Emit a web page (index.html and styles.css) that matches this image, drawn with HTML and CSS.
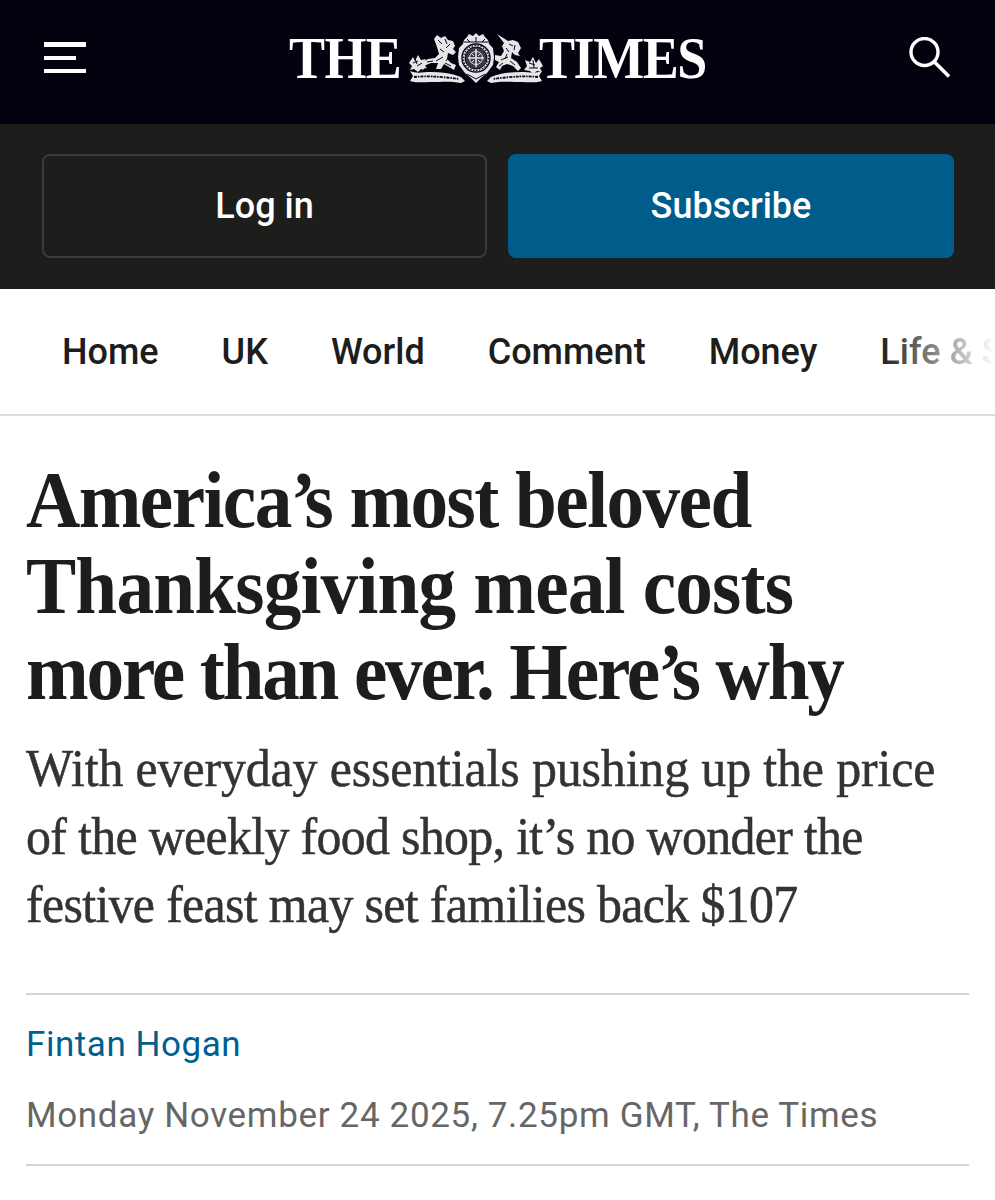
FILE: index.html
```html
<!DOCTYPE html>
<html lang="en">
<head>
<meta charset="utf-8">
<title>The Times</title>
<link rel="stylesheet" href="styles.css">
</head>
<body>
<header class="masthead">
  <svg class="menu-icon" width="42" height="31" viewBox="0 0 42 31" aria-hidden="true">
    <rect x="0" y="0" width="42" height="5" fill="#fff"/>
    <rect x="0" y="14" width="32" height="4" fill="#fff"/>
    <rect x="0" y="27" width="42" height="4" fill="#fff"/>
  </svg>
  <div class="logo">
    <span class="logo-word logo-the">THE</span>
    <svg class="crest" width="134" height="52" viewBox="0 0 134 52" aria-hidden="true">
      <g fill="#e6e6e6">
        <!-- motto ribbon -->
        <path d="M1 39 C8 42 14 40 22 40 C32 40 42 41 52 45 L56 49 L52 51 C42 49 34 50 22 50 C14 50 6 51 1 49 L4 44 Z"/>
        <path d="M133 39 C126 42 120 40 112 40 C102 40 92 41 82 45 L78 49 L82 51 C92 49 100 50 112 50 C120 50 128 51 133 49 L130 44 Z"/>
        <!-- lion -->
        <path d="M25 7 L28 3 L32 6 L36 4 L39 8 L44 9 L46 14 L44 17 L47 20 L44 23 L39 21 L38 27 L42 31 L47 33 L45 38 L40 35 L35 32 L32 37 L27 37 L29 31 L22 31 L17 33 L14 38 L11 36 L14 30 L19 27 L26 26 L30 22 L28 15 Z"/>
        <!-- unicorn -->
        <path d="M88 2 L99 9 L104 8 L109 10 L112 16 L109 21 L111 24 L106 23 L103 20 L102 26 L108 30 L112 36 L109 39 L104 34 L98 32 L93 34 L91 38 L87 35 L90 30 L86 28 L86 23 L92 24 L95 19 L93 14 L95 11 Z"/>
        <!-- thistle and rose -->
        <path d="M0 31 L4 25 L6 29 L9 23 L12 28 L17 27 L14 32 L18 36 L12 37 L9 40 L5 37 L1 38 L3 34 Z"/>
        <path d="M134 34 L130 27 L127 31 L124 25 L121 30 L116 28 L118 34 L115 38 L121 39 L124 42 L128 39 L133 40 L131 36 Z"/>
        <!-- crowned shield -->
        <path d="M67 1 L70 4 L74 2 L76 5 L79 8 L80 12 L84 16 L85 25 L84 33 L78 41 L72 46 L67 51 L62 46 L56 41 L50 33 L49 25 L50 16 L54 12 L55 8 L58 5 L60 2 L64 4 Z"/>
      </g>
      <g fill="none" stroke="#05051a">
        <circle cx="67" cy="26" r="14" stroke-width="1.4"/>
        <circle cx="67" cy="26" r="11" fill="#3a3a44" stroke-width="1"/>
        <circle cx="67" cy="26" r="12.5" stroke-width="1.2" stroke-dasharray="1.5 1.5"/>
        <path d="M55 10 H79 M58 7 L61 10 M67 5 V10 M76 7 L73 10" stroke-width="1"/>
        <path d="M58 42 L67 47 L76 42" stroke-width="1"/>
        <path d="M5 45 C16 44 28 44 50 47" stroke-width="1.8" stroke-dasharray="3 1 1.5 1"/>
        <path d="M129 45 C118 44 106 44 84 47" stroke-width="1.8" stroke-dasharray="3 1 1.5 1"/>
        <path d="M29 8 L33 12 M36 7 L38 12 M41 12 L37 16 M31 17 L35 20 M27 29 L34 25 M18 30 L24 29 M40 25 L37 29 M36 31 L42 34" stroke-width="1"/>
        <path d="M100 12 L104 14 M106 13 L105 18 M97 16 L100 20 M92 28 L99 25 M101 29 L106 33 M94 31 L90 34 M98 22 L96 27" stroke-width="1"/>
        <path d="M4 31 L9 29 M8 34 L13 31 M6 27 L8 32 M120 31 L126 33 M124 28 L125 36 M120 36 L129 36" stroke-width="1"/>
      </g>
      <g fill="none" stroke="#e6e6e6">
        <path d="M67 17 V35 M59 26 H75" stroke-width="1.6"/>
        <circle cx="67" cy="26" r="6.5" stroke-width="1"/>
        <path d="M62 21 L65 24 M72 21 L69 24 M62 31 L65 28 M72 31 L69 28" stroke-width="1"/>
      </g>
    </svg>
    <span class="logo-word logo-times">TIMES</span>
  </div>
  <svg class="search-icon" width="42" height="42" viewBox="0 0 42 42" aria-hidden="true">
    <circle cx="15.5" cy="15" r="13.5" fill="none" stroke="#fff" stroke-width="3.4"/>
    <path d="M25.5 25 L40 39.5" fill="none" stroke="#fff" stroke-width="3.6"/>
  </svg>
</header>

<div class="auth-bar">
  <a class="auth-btn auth-login">Log in</a>
  <a class="auth-btn auth-subscribe">Subscribe</a>
</div>

<nav class="section-nav">
  <a>Home</a>
  <a>UK</a>
  <a>World</a>
  <a>Comment</a>
  <a>Money</a>
  <a>Life &amp; Style</a>
</nav>

<main class="article-head">
  <h1 class="headline">
    <span class="line headline-1">America<span class="apos">’</span>s most beloved</span>
    <span class="line headline-2">Thanksgiving meal costs</span>
    <span class="line headline-3">more than ever. Here<span class="apos">’</span>s why</span>
  </h1>
  <p class="standfirst">
    <span class="line stand-1">With everyday essentials pushing up the price</span>
    <span class="line stand-2">of the weekly food shop, it’s no wonder the</span>
    <span class="line stand-3">festive feast may set families back $107</span>
  </p>
  <div class="byline">
    <a class="author">Fintan Hogan</a>
    <p class="dateline">Monday November 24 2025, 7.25pm GMT, The Times</p>
  </div>
</main>
</body>
</html>
```
FILE: styles.css
```css
* { box-sizing: border-box; }
html, body { margin: 0; padding: 0; background: #fff; }
body { font-family: Roboto, "Liberation Sans", sans-serif; overflow-x: hidden; }

.masthead {
  height: 124px;
  background: #02020f;
  display: flex;
  align-items: center;
  justify-content: space-between;
  padding: 0 44px;
}
.menu-icon { display: block; margin-bottom: 9px; }
.search-icon { display: block; margin-top: -9px; }
.logo { display: flex; align-items: center; margin-bottom: 8px; }
.logo-word {
  font-family: "Liberation Serif", serif;
  font-weight: 700;
  font-size: 60px;
  line-height: 1;
  color: #fff;
  transform: scaleX(0.9);
  transform-origin: left center;
}
.logo-the { letter-spacing: -0.7px; margin-right: -12.3px; }
.logo-times { letter-spacing: -1.6px; margin-right: -18.6px; }
.crest { display: block; margin: 0 -4px 0 8px; }

.auth-bar {
  height: 165px;
  background: #1d1d1b;
  display: grid;
  grid-template-columns: 445px 446px;
  column-gap: 21px;
  padding: 30px 41px 31px 42px;
}
.auth-btn {
  display: flex;
  align-items: center;
  justify-content: center;
  border-radius: 8px;
  color: #fff;
  font-size: 36px;
  font-weight: 500;
}
.auth-login { border: 2px solid #3a3a38; }
.auth-subscribe { background: #005c8a; }

.section-nav {
  height: 127px;
  display: flex;
  align-items: center;
  gap: 63px;
  padding: 0 0 0 62px;
  border-bottom: 2px solid #dcdcdc;
  overflow: hidden;
  position: relative;
  white-space: nowrap;
}
.section-nav a {
  font-size: 36px;
  font-weight: 500;
  color: #1d1d1b;
  flex: none;
}
.section-nav::after {
  content: "";
  position: absolute;
  top: 0;
  right: 0;
  bottom: 0;
  width: 115px;
  background: linear-gradient(to right, rgba(255,255,255,0), #fff);
}

.article-head { padding: 41px 26px 0 26px; }
.line { display: block; white-space: nowrap; }
.headline {
  margin: 0;
  font-family: "Liberation Serif", serif;
  font-weight: 700;
  font-size: 80px;
  line-height: 86px;
  color: #1d1d1b;
  transform: scaleX(0.94);
  transform-origin: left top;
}
.apos { letter-spacing: -12px; }
.headline-1 { letter-spacing: -1.65px; }
.headline-2 { letter-spacing: -0.85px; }
.headline-3 { letter-spacing: -2.3px; }
.standfirst {
  margin: 20px 0 0;
  font-family: "Liberation Serif", serif;
  font-size: 52px;
  line-height: 68px;
  color: #333331;
  -webkit-text-stroke: 0.5px #333331;
  transform: scaleX(0.96);
  transform-origin: left top;
}
.stand-1 { letter-spacing: -0.15px; }
.stand-2 { letter-spacing: -0.72px; }
.stand-3 { letter-spacing: -0.7px; }
.byline {
  margin-top: 54px;
  border-top: 2px solid #d4d4d4;
  border-bottom: 2px solid #d4d4d4;
  height: 173px;
  padding-top: 28px;
}
.author {
  display: block;
  font-size: 35px;
  line-height: 44px;
  color: #005f8f;
  letter-spacing: 0.55px;
}
.dateline {
  margin: 27px 0 0;
  font-size: 35px;
  line-height: 44px;
  color: #666666;
  letter-spacing: 0.66px;
}
```
